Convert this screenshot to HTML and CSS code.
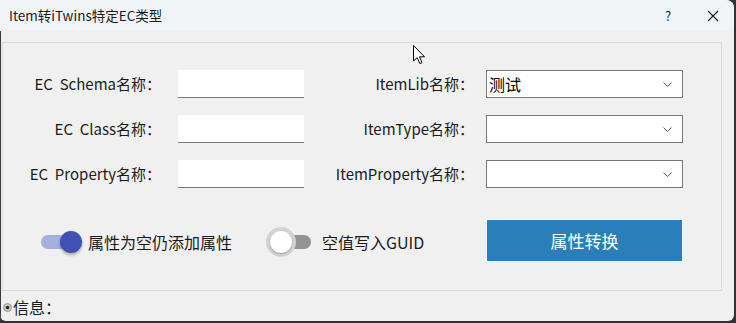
FILE: index.html
```html
<!DOCTYPE html>
<html>
<head>
<meta charset="utf-8">
<link rel="stylesheet" href="styles.css">
</head>
<body>
<div class="window">
  <div class="titlebar">
    <span class="title">Item转iTwins特定EC类型</span>
    <span class="tb-help">?</span>
    <span class="tb-close"><svg width="12" height="12" viewBox="0 0 12 12"><path d="M1 1L11 11M11 1L1 11" stroke="#1a1a1a" stroke-width="1.1"/></svg></span>
  </div>
  <div class="client">
    <div class="panel">
      <div class="label l1 r1">EC&nbsp; Schema名称：</div>
      <div class="textbox r1"></div>
      <div class="label l2 r1">ItemLib名称：</div>
      <div class="combo r1"><span class="combo-text">测试</span><svg class="chev" width="9" height="5" viewBox="0 0 9 5"><path d="M0.5 0.5L4.5 4.5L8.5 0.5" fill="none" stroke="#555" stroke-width="1"/></svg></div>

      <div class="label l1 r2">EC&nbsp; Class名称：</div>
      <div class="textbox r2"></div>
      <div class="label l2 r2">ItemType名称：</div>
      <div class="combo r2"><span class="combo-text"></span><svg class="chev" width="9" height="5" viewBox="0 0 9 5"><path d="M0.5 0.5L4.5 4.5L8.5 0.5" fill="none" stroke="#555" stroke-width="1"/></svg></div>

      <div class="label l1 r3">EC&nbsp; Property名称：</div>
      <div class="textbox r3"></div>
      <div class="label l2 r3">ItemProperty名称：</div>
      <div class="combo r3"><span class="combo-text"></span><svg class="chev" width="9" height="5" viewBox="0 0 9 5"><path d="M0.5 0.5L4.5 4.5L8.5 0.5" fill="none" stroke="#555" stroke-width="1"/></svg></div>

      <div class="toggles">
        <div class="toggle-item t1">
          <div class="toggle on"><span class="track"></span><span class="knob"></span></div>
          <span class="toggle-text">属性为空仍添加属性</span>
        </div>
        <div class="toggle-item t2">
          <div class="toggle off"><span class="track"></span><span class="halo"></span><span class="knob"></span></div>
          <span class="toggle-text">空值写入GUID</span>
        </div>
      </div>
      <div class="btn">属性转换</div>
    </div>
    <div class="info">
      <svg class="info-icon" width="9" height="9" viewBox="0 0 9 9"><circle cx="4.5" cy="4.5" r="4" fill="#c8c8c8" stroke="#8a8a8a" stroke-width="0.8"/><circle cx="4.5" cy="4.5" r="1.8" fill="#2b2b2b"/></svg>
      <span class="info-text">信息：</span>
    </div>
  </div>
  <svg class="cursor" width="13" height="20" viewBox="0 0 13 20"><path d="M0.5 0.5L0.5 16L4.2 12.6L6.8 18.6L9 17.6L6.5 11.8L11.5 11.8Z" fill="#fff" stroke="#000" stroke-width="1" stroke-linejoin="round"/></svg>
</div>
</body>
</html>
```

FILE: styles.css
```css
* { box-sizing: border-box; }
html, body { margin: 0; padding: 0; }
body {
  width: 736px;
  height: 323px;
  background: #2f3337;
  overflow: hidden;
  font-family: "Noto Sans CJK SC", "Noto Sans", sans-serif;
  color: #1a1a1a;
}
.window {
  position: relative;
  width: 734px;
  height: 321px;
  background: #f0f0f0;
  border-bottom-left-radius: 6px;
  border-bottom-right-radius: 6px;
  border-top-right-radius: 8px;
  overflow: hidden;
}
.titlebar {
  height: 31px;
  background: #f1f4f7;
  display: flex;
  align-items: center;
  padding-left: 9px;
  font-size: 13.5px;
}
.title { flex: 1; line-height: 1; }
.tb-help { font-size: 13px; width: 14px; margin-right: 28px; }
.tb-close { width: 12px; margin-right: 15px; display: flex; }
.client {
  padding: 11px 12px 0 1px;
  border-left: 1px solid #3a3a3a;
  height: 290px;
}
.panel {
  border: 1px solid #dadada;
  height: 249px;
  display: grid;
  grid-template-columns: 175px 126px 182px 197px;
  grid-template-rows: 28px 28px 28px 43px;
  row-gap: 17px;
  align-content: start;
  padding-top: 27px;
}
.r1 { grid-row: 1; }
.r2 { grid-row: 2; }
.r3 { grid-row: 3; }
.label {
  font-size: 15px;
  text-align: right;
  line-height: 28px;
  white-space: nowrap;
}
.l1 { grid-column: 1; padding-right: 17px; }
.l2 { grid-column: 3; padding-right: 12px; }
.textbox {
  background: #fff;
  border-bottom: 1px solid #7a7a7a;
  grid-column: 2;
}
.combo {
  grid-column: 4;
  background: #fff;
  border: 1px solid #7a7a7a;
  display: flex;
  align-items: center;
  padding: 0 10px 0 2px;
}
.combo-text { flex: 1; font-size: 16px; color: #000; }
.chev { display: block; }
.toggles {
  grid-column: 1 / 4;
  grid-row: 4;
  display: flex;
  align-items: center;
  margin-top: 15px;
  height: 43px;
}
.toggle-item { display: flex; align-items: center; }
.t1 { margin-left: 33px; }
.t2 { margin-left: 38px; }
.toggle {
  position: relative;
  width: 46px;
  height: 30px;
  margin-right: 6px;
}
.track {
  position: absolute;
  left: 5px;
  right: 5px;
  top: 8px;
  height: 14px;
  border-radius: 7px;
}
.knob {
  position: absolute;
  top: 4px;
  width: 22px;
  height: 22px;
  border-radius: 50%;
}
.on .track { background: #a6b0dc; }
.on .knob { right: 0; background: #3f51b5; box-shadow: 0 2px 3px rgba(0,0,0,0.3); }
.off .track { background: #939393; }
.off .knob { left: 0; background: #fff; box-shadow: 0 1px 2px rgba(0,0,0,0.25); }
.halo {
  position: absolute;
  left: -4px;
  top: 0;
  width: 30px;
  height: 30px;
  border-radius: 50%;
  background: #d3d3d3;
}
.toggle-text { font-size: 16px; }
.btn {
  grid-column: 4;
  grid-row: 4;
  margin-top: 14px;
  height: 43px;
  background: #2a7fba;
  border: 1px solid #fff;
  color: #fff;
  font-size: 17px;
  display: flex;
  align-items: center;
  justify-content: center;
}
.info {
  display: flex;
  align-items: center;
  height: 31px;
  padding-left: 1px;
}
.info-icon { display: block; margin-top: 1px; }
.info-text { font-size: 16px; margin-left: 1px; }
.cursor {
  position: absolute;
  left: 413px;
  top: 45px;
}
```
